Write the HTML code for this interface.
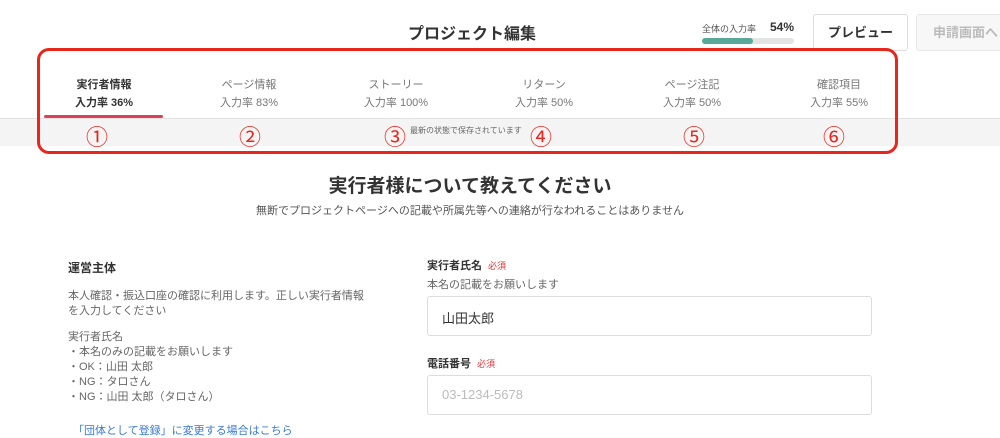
<!DOCTYPE html>
<html><head><meta charset="utf-8"><style>
*{margin:0;padding:0;box-sizing:border-box}
body{width:1000px;height:433px;overflow:hidden;background:#fff;font-family:"Liberation Sans","Noto Sans CJK JP",sans-serif;color:#333;position:relative}
.a{position:absolute;white-space:nowrap}
.tab{position:absolute;top:76px;width:120px;text-align:center;font-size:11px;color:#777;line-height:18px}
.num{position:absolute;top:124px;font-size:22px;color:#e8261c;width:30px;text-align:center;line-height:28px}
.g{font-size:11px;color:#666;line-height:15px}
.inp{position:absolute;left:427px;width:445px;height:40px;border:1px solid #ddd;border-radius:3px;font-size:13px;padding:11px 14px}
.req{color:#d33;font-size:9px;font-weight:normal;margin-left:6px}
</style></head><body>
<div class="a" style="left:408px;top:20px;font-size:16px;font-weight:bold;color:#333">プロジェクト編集</div>
<div class="a" style="left:702px;top:22px;font-size:9px;color:#555">全体の入力率</div>
<div class="a" style="left:770px;top:20px;font-size:12px;font-weight:bold">54%</div>
<div class="a" style="left:702px;top:38px;width:92px;height:6px;background:#e4e4e4;border-radius:3px"><div style="width:51px;height:6px;background:#5aa89a;border-radius:3px"></div></div>
<div class="a" style="left:813px;top:14px;width:95px;height:37px;border:1px solid #ddd;border-radius:3px;font-size:13px;font-weight:bold;text-align:center;line-height:35px">プレビュー</div>
<div class="a" style="left:916px;top:14px;width:100px;height:37px;border:1px solid #e6e6e6;border-radius:3px;background:#f7f7f7;font-size:13px;font-weight:bold;color:#bbb;padding-left:16px;line-height:35px">申請画面へ</div>

<div class="tab" style="left:44px;color:#333;font-weight:bold">実行者情報<br>入力率 36%</div>
<div class="tab" style="left:189px">ページ情報<br>入力率 83%</div>
<div class="tab" style="left:336px">ストーリー<br>入力率 100%</div>
<div class="tab" style="left:484px">リターン<br>入力率 50%</div>
<div class="tab" style="left:632px">ページ注記<br>入力率 50%</div>
<div class="tab" style="left:779px">確認項目<br>入力率 55%</div>
<div class="a" style="left:0;top:118px;width:1000px;height:28px;background:#f4f4f4;border-top:1px solid #e2e2e2"></div>
<div class="a" style="left:44px;top:115px;width:119px;height:3px;background:#d9425a;border-radius:2px"></div>
<div class="a" style="left:410px;top:125px;font-size:8px;color:#666">最新の状態で保存されています</div>
<div class="num" style="left:82px">①</div>
<div class="num" style="left:235px">②</div>
<div class="num" style="left:380px">③</div>
<div class="num" style="left:526px">④</div>
<div class="num" style="left:679px">⑤</div>
<div class="num" style="left:819px">⑥</div>
<div class="a" style="left:37px;top:48px;width:861px;height:106px;border:3px solid #e8261c;border-radius:12px"></div>

<div class="a" style="left:0;width:940px;top:171px;text-align:center;font-size:19px;font-weight:bold;color:#333">実行者様について教えてください</div>
<div class="a" style="left:0;width:940px;top:202px;text-align:center;font-size:11px;color:#555">無断でプロジェクトページへの記載や所属先等への連絡が行なわれることはありません</div>

<div class="a" style="left:68px;top:259px;font-size:12px;font-weight:bold">運営主体</div>
<div class="a g" style="left:68px;top:289px">本人確認・振込口座の確認に利用します。正しい実行者情報<br>を入力してください</div>
<div class="a g" style="left:68px;top:330px">実行者氏名<br>・本名のみの記載をお願いします<br>・OK：山田 太郎<br>・NG：タロさん<br>・NG：山田 太郎（タロさん）</div>
<div class="a" style="left:73px;top:422px;font-size:11px;color:#3a7bd5">「団体として登録」に変更する場合はこちら</div>

<div class="a" style="left:427px;top:257px;font-size:11px;font-weight:bold">実行者氏名<span class="req">必須</span></div>
<div class="a" style="left:427px;top:276px;font-size:11px;color:#666">本名の記載をお願いします</div>
<div class="inp" style="top:296px">山田太郎</div>
<div class="a" style="left:427px;top:355px;font-size:11px;font-weight:bold">電話番号<span class="req">必須</span></div>
<div class="inp" style="top:375px;color:#bbb">03-1234-5678</div>
</body></html>
